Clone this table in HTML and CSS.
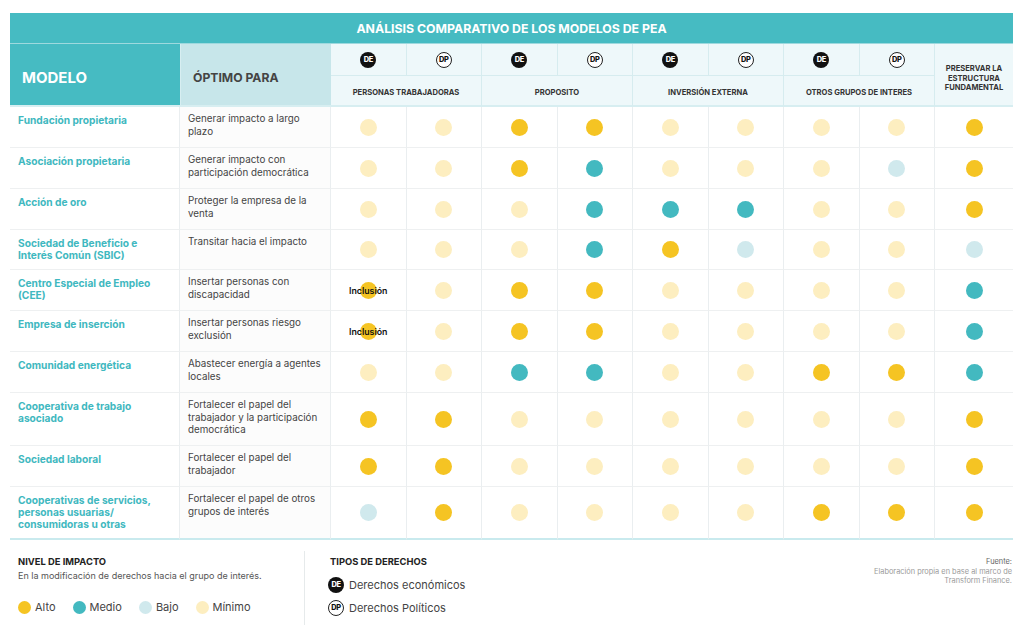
FILE: index.html
```html
<!DOCTYPE html>
<html lang="es">
<head>
<meta charset="utf-8">
<title>Análisis comparativo de los modelos de PEA</title>
<link rel="stylesheet" href="styles.css">
</head>
<body>
<div class="page">
  <div class="grid">
    <div class="title">ANÁLISIS COMPARATIVO DE LOS MODELOS DE PEA</div>

    <div class="h-modelo">MODELO</div>
    <div class="h-optimo">ÓPTIMO PARA</div>
    <div class="h-icon"><span class="de">DE</span></div>
    <div class="h-icon"><span class="dp">DP</span></div>
    <div class="h-icon"><span class="de">DE</span></div>
    <div class="h-icon"><span class="dp">DP</span></div>
    <div class="h-icon"><span class="de">DE</span></div>
    <div class="h-icon"><span class="dp">DP</span></div>
    <div class="h-icon"><span class="de">DE</span></div>
    <div class="h-icon"><span class="dp">DP</span></div>
    <div class="h-pres">PRESERVAR LA<br>ESTRUCTURA<br>FUNDAMENTAL</div>
    <div class="h-group">PERSONAS TRABAJADORAS</div>
    <div class="h-group">PROPOSITO</div>
    <div class="h-group">INVERSIÓN EXTERNA</div>
    <div class="h-group">OTROS GRUPOS DE INTERES</div>

    <!-- Row 1 -->
    <div class="c-model">Fundación propietaria</div>
    <div class="c-opt">Generar impacto a largo plazo</div>
    <div class="c-dot"><span class="dot min"></span></div>
    <div class="c-dot"><span class="dot min"></span></div>
    <div class="c-dot"><span class="dot alto"></span></div>
    <div class="c-dot"><span class="dot alto"></span></div>
    <div class="c-dot"><span class="dot min"></span></div>
    <div class="c-dot"><span class="dot min"></span></div>
    <div class="c-dot"><span class="dot min"></span></div>
    <div class="c-dot"><span class="dot min"></span></div>
    <div class="c-dot last"><span class="dot alto"></span></div>

    <!-- Row 2 -->
    <div class="c-model">Asociación propietaria</div>
    <div class="c-opt">Generar impacto con participación democrática</div>
    <div class="c-dot"><span class="dot min"></span></div>
    <div class="c-dot"><span class="dot min"></span></div>
    <div class="c-dot"><span class="dot alto"></span></div>
    <div class="c-dot"><span class="dot medio"></span></div>
    <div class="c-dot"><span class="dot min"></span></div>
    <div class="c-dot"><span class="dot min"></span></div>
    <div class="c-dot"><span class="dot min"></span></div>
    <div class="c-dot"><span class="dot bajo"></span></div>
    <div class="c-dot last"><span class="dot alto"></span></div>

    <!-- Row 3 -->
    <div class="c-model">Acción de oro</div>
    <div class="c-opt">Proteger la empresa de la venta</div>
    <div class="c-dot"><span class="dot min"></span></div>
    <div class="c-dot"><span class="dot min"></span></div>
    <div class="c-dot"><span class="dot min"></span></div>
    <div class="c-dot"><span class="dot medio"></span></div>
    <div class="c-dot"><span class="dot medio"></span></div>
    <div class="c-dot"><span class="dot medio"></span></div>
    <div class="c-dot"><span class="dot min"></span></div>
    <div class="c-dot"><span class="dot min"></span></div>
    <div class="c-dot last"><span class="dot alto"></span></div>

    <!-- Row 4 -->
    <div class="c-model">Sociedad de Beneficio e Interés Común (SBIC)</div>
    <div class="c-opt">Transitar hacia el impacto</div>
    <div class="c-dot"><span class="dot min"></span></div>
    <div class="c-dot"><span class="dot min"></span></div>
    <div class="c-dot"><span class="dot min"></span></div>
    <div class="c-dot"><span class="dot medio"></span></div>
    <div class="c-dot"><span class="dot alto"></span></div>
    <div class="c-dot"><span class="dot bajo"></span></div>
    <div class="c-dot"><span class="dot min"></span></div>
    <div class="c-dot"><span class="dot min"></span></div>
    <div class="c-dot last"><span class="dot bajo"></span></div>

    <!-- Row 5 -->
    <div class="c-model">Centro Especial de Empleo (CEE)</div>
    <div class="c-opt">Insertar personas con discapacidad</div>
    <div class="c-dot"><span class="dot alto"><span class="tag">Inclusión</span></span></div>
    <div class="c-dot"><span class="dot min"></span></div>
    <div class="c-dot"><span class="dot alto"></span></div>
    <div class="c-dot"><span class="dot alto"></span></div>
    <div class="c-dot"><span class="dot min"></span></div>
    <div class="c-dot"><span class="dot min"></span></div>
    <div class="c-dot"><span class="dot min"></span></div>
    <div class="c-dot"><span class="dot min"></span></div>
    <div class="c-dot last"><span class="dot medio"></span></div>

    <!-- Row 6 -->
    <div class="c-model">Empresa de inserción</div>
    <div class="c-opt">Insertar personas riesgo exclusión</div>
    <div class="c-dot"><span class="dot alto"><span class="tag">Inclusión</span></span></div>
    <div class="c-dot"><span class="dot min"></span></div>
    <div class="c-dot"><span class="dot alto"></span></div>
    <div class="c-dot"><span class="dot alto"></span></div>
    <div class="c-dot"><span class="dot min"></span></div>
    <div class="c-dot"><span class="dot min"></span></div>
    <div class="c-dot"><span class="dot min"></span></div>
    <div class="c-dot"><span class="dot min"></span></div>
    <div class="c-dot last"><span class="dot medio"></span></div>

    <!-- Row 7 -->
    <div class="c-model">Comunidad energética</div>
    <div class="c-opt">Abastecer energía a agentes locales</div>
    <div class="c-dot"><span class="dot min"></span></div>
    <div class="c-dot"><span class="dot min"></span></div>
    <div class="c-dot"><span class="dot medio"></span></div>
    <div class="c-dot"><span class="dot medio"></span></div>
    <div class="c-dot"><span class="dot min"></span></div>
    <div class="c-dot"><span class="dot min"></span></div>
    <div class="c-dot"><span class="dot alto"></span></div>
    <div class="c-dot"><span class="dot alto"></span></div>
    <div class="c-dot last"><span class="dot medio"></span></div>

    <!-- Row 8 -->
    <div class="c-model">Cooperativa de trabajo asociado</div>
    <div class="c-opt">Fortalecer el papel del trabajador y la participación democrática</div>
    <div class="c-dot"><span class="dot alto"></span></div>
    <div class="c-dot"><span class="dot alto"></span></div>
    <div class="c-dot"><span class="dot min"></span></div>
    <div class="c-dot"><span class="dot min"></span></div>
    <div class="c-dot"><span class="dot min"></span></div>
    <div class="c-dot"><span class="dot min"></span></div>
    <div class="c-dot"><span class="dot min"></span></div>
    <div class="c-dot"><span class="dot min"></span></div>
    <div class="c-dot last"><span class="dot alto"></span></div>

    <!-- Row 9 -->
    <div class="c-model">Sociedad laboral</div>
    <div class="c-opt">Fortalecer el papel del trabajador</div>
    <div class="c-dot"><span class="dot alto"></span></div>
    <div class="c-dot"><span class="dot alto"></span></div>
    <div class="c-dot"><span class="dot min"></span></div>
    <div class="c-dot"><span class="dot min"></span></div>
    <div class="c-dot"><span class="dot min"></span></div>
    <div class="c-dot"><span class="dot min"></span></div>
    <div class="c-dot"><span class="dot min"></span></div>
    <div class="c-dot"><span class="dot min"></span></div>
    <div class="c-dot last"><span class="dot alto"></span></div>

    <!-- Row 10 -->
    <div class="c-model end">Cooperativas de servicios, personas usuarias/ consumidoras u otras</div>
    <div class="c-opt end">Fortalecer el papel de otros grupos de interés</div>
    <div class="c-dot end"><span class="dot bajo"></span></div>
    <div class="c-dot end"><span class="dot alto"></span></div>
    <div class="c-dot end"><span class="dot min"></span></div>
    <div class="c-dot end"><span class="dot min"></span></div>
    <div class="c-dot end"><span class="dot min"></span></div>
    <div class="c-dot end"><span class="dot min"></span></div>
    <div class="c-dot end"><span class="dot alto"></span></div>
    <div class="c-dot end"><span class="dot alto"></span></div>
    <div class="c-dot end last"><span class="dot alto"></span></div>
  </div>

  <div class="legend">
    <div class="lg-impact">
      <div class="lg-title">NIVEL DE IMPACTO</div>
      <div class="lg-sub">En la modificación de derechos hacia el grupo de interés.</div>
      <div class="lg-items">
        <span class="lg-item"><span class="ldot alto"></span>Alto</span>
        <span class="lg-item"><span class="ldot medio"></span>Medio</span>
        <span class="lg-item"><span class="ldot bajo"></span>Bajo</span>
        <span class="lg-item"><span class="ldot min"></span>Mínimo</span>
      </div>
    </div>
    <div class="lg-types">
      <div class="lg-title">TIPOS DE DERECHOS</div>
      <div class="lg-type"><span class="de">DE</span>Derechos económicos</div>
      <div class="lg-type"><span class="dp">DP</span>Derechos Políticos</div>
    </div>
    <div class="lg-source">
      <div class="src-h">Fuente:</div>
      <div>Elaboración propia en base al marco de<br>Transform Finance.</div>
    </div>
  </div>
</div>
</body>
</html>
```

FILE: styles.css
```css
* { box-sizing: border-box; }

body {
  margin: 0;
  background: #ffffff;
  font-family: Inter, "Noto Sans", "Liberation Sans", sans-serif;
  color: #333;
}

.page {
  padding: 13px 11px 0 10px;
}

.grid {
  display: grid;
  grid-template-columns: 170px 151px repeat(8, 75.5px) 78px;
  grid-template-rows: 31px 32px 31px 41px 41px 41px 40px 41px 41px 41px 53px 41px 53px;
}

.title {
  grid-column: 1 / -1;
  background: #46bbc2;
  color: #fff;
  font-weight: 700;
  font-size: 12.3px;
  display: flex;
  align-items: center;
  justify-content: center;
  border-bottom: 1px solid #9ed9de;
}

.h-modelo {
  grid-row: 2 / 4;
  background: #46bbc2;
  color: #fff;
  font-weight: 700;
  font-size: 15px;
  display: flex;
  align-items: center;
  padding-left: 12px;
  padding-top: 5px;
  border-bottom: 2px solid #d7eef1;
}

.h-optimo {
  grid-row: 2 / 4;
  background: #c7e6ea;
  color: #444;
  font-weight: 700;
  font-size: 12.2px;
  display: flex;
  align-items: center;
  padding-left: 12px;
  padding-top: 5px;
  border-bottom: 2px solid #d7eef1;
  border-left: 1px solid #d7eef1;
}

.h-icon {
  background: #eef8fa;
  display: flex;
  align-items: center;
  justify-content: center;
  border-right: 1px solid #d6ecef;
  border-bottom: 1px solid #d6ecef;
}

.h-pres {
  grid-column: 11;
  grid-row: 2 / 4;
  background: #eef8fa;
  font-weight: 700;
  font-size: 7.6px;
  line-height: 9.6px;
  color: #333;
  text-align: center;
  display: flex;
  align-items: center;
  justify-content: center;
  padding-top: 8px;
  border-bottom: 2px solid #d7eef1;
}

.h-group {
  grid-column: span 2;
  background: #eef8fa;
  font-weight: 700;
  font-size: 7.6px;
  color: #333;
  display: flex;
  align-items: center;
  justify-content: center;
  padding-top: 3px;
  border-right: 1px solid #d6ecef;
  border-bottom: 2px solid #d7eef1;
}

.de, .dp {
  display: inline-flex;
  align-items: center;
  justify-content: center;
  flex: none;
  width: 16px;
  height: 16px;
  border-radius: 50%;
  font-size: 7.4px;
  font-weight: 800;
  letter-spacing: -0.3px;
  line-height: 1;
}
.de { background: #111; color: #fff; }
.dp { background: #fff; color: #111; border: 1.2px solid #222; }

.c-model {
  color: #3fb8c0;
  font-weight: 700;
  font-size: 10.2px;
  line-height: 12px;
  padding: 7px 8px 0 8px;
  border-bottom: 1px solid #eef0f1;
  border-right: 1px solid #eaeef0;
}

.c-opt {
  color: #444;
  font-size: 9.8px;
  line-height: 12.5px;
  padding: 6px 6px 0 8px;
  background: #fcfcfc;
  border-bottom: 1px solid #eef0f1;
  border-right: 1px solid #eaeef0;
}

.c-dot {
  display: flex;
  align-items: center;
  justify-content: center;
  border-bottom: 1px solid #eef0f1;
  border-right: 1px solid #eaeef0;
}
.c-dot.last { border-right: none; }

.end { border-bottom: 2px solid #c9eaee; }

.dot {
  position: relative;
  width: 17px;
  height: 17px;
  border-radius: 50%;
}
.alto { background: #f5c423; }
.medio { background: #43b9c0; }
.bajo { background: #d0e9ed; }
.min { background: #fdeec0; }

.tag {
  position: absolute;
  left: 50%;
  top: 50%;
  transform: translate(-50%, -50%);
  font-size: 8.8px;
  font-weight: 600;
  color: #111;
  white-space: nowrap;
}

.legend {
  display: flex;
  align-items: flex-start;
  padding-top: 11px;
  height: 85px;
}

.lg-impact {
  width: 295px;
  padding-left: 8px;
  padding-top: 5px;
  height: 74px;
  border-right: 1px solid #e6eaeb;
}

.lg-title {
  font-size: 9.4px;
  font-weight: 700;
  color: #222;
}

.lg-sub {
  font-size: 9px;
  color: #555;
  margin-top: 3px;
}

.lg-items {
  display: flex;
  gap: 17px;
  margin-top: 19px;
}

.lg-item {
  display: inline-flex;
  align-items: center;
  gap: 4px;
  font-size: 11px;
  color: #444;
}

.ldot {
  width: 13px;
  height: 13px;
  border-radius: 50%;
}

.lg-types {
  padding-left: 25px;
  padding-top: 5px;
  flex: 1;
}

.lg-type {
  display: flex;
  align-items: center;
  gap: 5px;
  font-size: 11px;
  color: #444;
  margin-top: 7px;
}
.lg-types .lg-title { margin-bottom: 0; }
.lg-types .lg-title + .lg-type { margin-top: 10px; }
.lg-type .de, .lg-type .dp { margin-left: -2px; }

.lg-source {
  text-align: right;
  font-size: 7.4px;
  line-height: 9.5px;
  color: #9a9a9a;
  padding-top: 6px;
  padding-right: 1px;
}
.src-h { color: #666; }
```
